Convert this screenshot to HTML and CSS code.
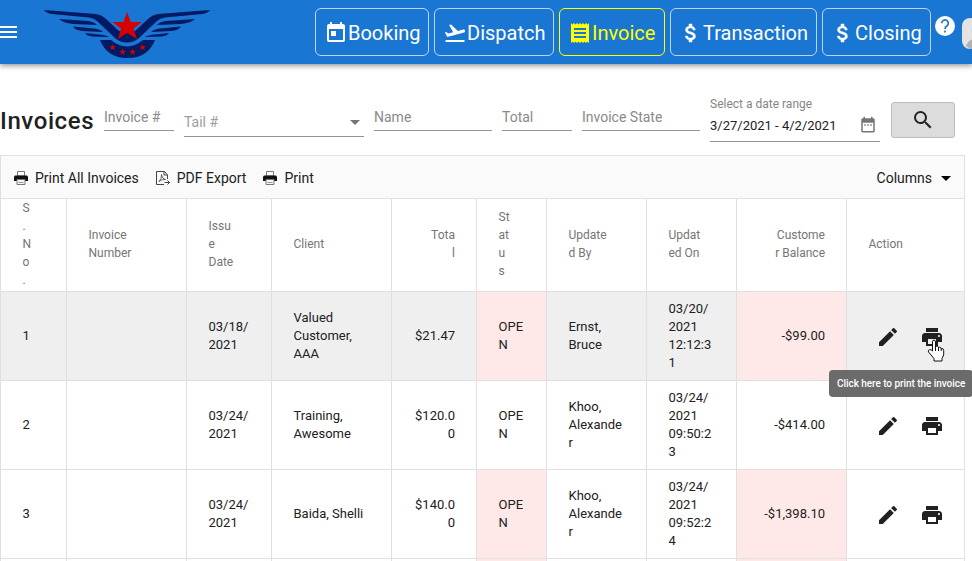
FILE: index.html
```
<!DOCTYPE html>
<html lang="en">

<head>
    <meta charset="UTF-8">
    <meta name="viewport" content="width=device-width, initial-scale=1.0">
    <title>Invoices</title>
    <link rel="stylesheet" href="styles.css">
</head>

<body>
    <!-- icon sprite -->
    <svg class="sprite" width="0" height="0">
        <symbol id="i-edit" viewBox="0 0 24 24"><path d="M3 17.25V21h3.75L17.81 9.94l-3.75-3.75L3 17.25zM20.71 7.04a1 1 0 0 0 0-1.41l-2.34-2.34a1 1 0 0 0-1.41 0l-1.83 1.83 3.75 3.75 1.83-1.83z"/></symbol>
        <symbol id="i-print" viewBox="0 0 24 24"><path d="M19 8H5c-1.66 0-3 1.34-3 3v6h4v4h12v-4h4v-6c0-1.66-1.34-3-3-3zm-3 11H8v-5h8v5zm3-7c-.55 0-1-.45-1-1s.45-1 1-1 1 .45 1 1-.45 1-1 1zm-1-9H6v4h12V3z"/></symbol>
        <symbol id="i-dollar" viewBox="0 0 24 24"><path d="M11.8 10.9c-2.27-.59-3-1.2-3-2.15 0-1.09 1.01-1.85 2.7-1.85 1.78 0 2.44.85 2.5 2.1h2.21c-.07-1.72-1.12-3.3-3.21-3.81V3h-3v2.16c-1.94.42-3.5 1.68-3.5 3.61 0 2.31 1.91 3.46 4.7 4.13 2.5.6 3 1.48 3 2.41 0 .69-.49 1.79-2.7 1.79-2.06 0-2.87-.92-2.98-2.1h-2.2c.12 2.19 1.76 3.42 3.68 3.83V21h3v-2.15c1.95-.37 3.5-1.5 3.5-3.55 0-2.84-2.43-3.81-4.7-4.4z" stroke="currentColor" stroke-width=".5"/></symbol>
        <symbol id="i-printer" viewBox="0 0 14 14">
            <path d="M3.5.5h7V5h-7z" fill="#fff" stroke="#777"/>
            <path d="M0 5.500 1 4.500h12l1 1V10H0z" fill="#111"/>
            <path d="M3 8.500h8V13.500H3z" fill="#f4f4f4" stroke="#777"/>
            <path d="M4.500 11.500h5" stroke="#999"/>
        </symbol>
    </svg>

    <header class="topbar">
        <svg class="menu" width="17" height="12" viewBox="0 0 17 12"><path d="M0 0h17v2H0zM0 5h17v2H0zM0 10h17v2H0z" fill="#fff"/></svg>
        <svg class="logo" width="166" height="50" viewBox="0 0 166 50">
            <g fill="#001b63">
                <path id="wing" d="M0 2 52 6Q58 7 62 11L75 23 83 25V34.500Q77 35 71 30L53 13Q50 10 45 9.500L8 6Q2 5 0 2zM15 11 44 13Q51 14 53 17L29 16Q19 15 15 11zM29 18.500 50 20.500Q56 21 59 24L38 23Q31 22 29 18.500zM41 25 55 26.500Q62 27 65 29L48 28.500Q43 28 41 25z"/>
                <use href="#wing" transform="translate(166 0) scale(-1 1)"/>
                <path d="M56 32H67Q83 45 99 32H111Q104 50 83.500 50 63 50 56 32z"/>
            </g>
            <g fill="#d60000">
                <path id="star" d="M83 4 86.800 14H98L89.500 20.500 93 31 83 25 74 31 77 20.500 68.500 14H79.500z"/>
                <use href="#star" transform="translate(49.500 35) scale(.23)"/>
                <use href="#star" transform="translate(59.500 39.500) scale(.23)"/>
                <use href="#star" transform="translate(69.500 39.500) scale(.23)"/>
                <use href="#star" transform="translate(79.500 35) scale(.23)"/>
            </g>
        </svg>
        <nav class="nav">
            <a class="nav-btn booking"><svg width="24" height="24" viewBox="0 0 24 24"><path d="M19 3h-1V1h-2v2H8V1H6v2H5c-1.110 0-2 .9-2 2v14c0 1.100.89 2 2 2h14c1.100 0 2-.9 2-2V5c0-1.100-.9-2-2-2zm0 16H5V8h14v11zM7 10h5v5H7z"/></svg>Booking</a>
            <a class="nav-btn dispatch"><svg width="24" height="24" viewBox="0 0 24 24"><path d="M2.500 19h19v2h-19zM22.070 9.640c-.21-.8-1.040-1.280-1.840-1.060L14.920 10l-6.900-6.430-1.930.51 4.140 7.170-4.970 1.330-1.970-1.540-1.450.39 2.590 4.490s7.120-1.900 16.570-4.430c.81-.23 1.280-1.050 1.070-1.850z"/></svg>Dispatch</a>
            <a class="nav-btn invoice active"><svg width="24" height="24" viewBox="0 0 24 24"><path d="M18 17H6v-2h12v2zm0-4H6v-2h12v2zm0-4H6V7h12v2zM3 22l1.500-1.500L6 22l1.500-1.500L9 22l1.500-1.500L12 22l1.500-1.500L15 22l1.500-1.500L18 22l1.500-1.500L21 22V2l-1.500 1.500L18 2l-1.500 1.500L15 2l-1.500 1.500L12 2l-1.500 1.500L9 2 7.500 3.500 6 2 4.500 3.500 3 2v20z"/></svg>Invoice</a>
            <a class="nav-btn transaction"><svg width="24" height="24"><use href="#i-dollar"/></svg>Transaction</a>
            <a class="nav-btn closing"><svg width="24" height="24"><use href="#i-dollar"/></svg>Closing</a>
        </nav>
        <svg class="help" width="24" height="24" viewBox="0 0 24 24"><circle cx="12" cy="12" r="10" fill="#fff"/><path d="M8.700 9.200A3.300 3.300 0 1 1 14 11.800C12.600 12.700 12 13.200 12 15M12 16.500v2" fill="none" stroke="#1976d2" stroke-width="1.700"/></svg>
        <svg class="avatar" width="32" height="31" viewBox="0 0 32 31"><rect width="32" height="31" rx="8" fill="#e3e3e3"/><circle cx="16" cy="13" r="6.500" fill="#c9c9c9"/><path d="M4 28Q7 20 16 20t12 8L24 31H8z" fill="#b0b0b0"/></svg>
    </header>

    <section class="filters">
        <h1>Invoices</h1>
        <div class="field w-sm">Invoice #</div>
        <div class="field tail">Tail #<span class="caret"></span></div>
        <div class="field w-md">Name</div>
        <div class="field w-sm">Total</div>
        <div class="field w-md">Invoice State</div>
        <div class="date">
            <label>Select a date range</label>
            <div class="date-value">3/27/2021 - 4/2/2021
                <svg width="18" height="18" viewBox="0 0 24 24"><path d="M19 3h-1V1h-2v2H8V1H6v2H5a2 2 0 0 0-2 2v15a2 2 0 0 0 2 2h14a2 2 0 0 0 2-2V5a2 2 0 0 0-2-2zm0 17H5V9h14zM7 11h2v2H7zm4 0h2v2h-2zm4 0h2v2h-2z" fill="#757575"/></svg>
            </div>
        </div>
        <button class="search"><svg width="24" height="24" viewBox="0 0 24 24"><path d="M15.500 14h-.79l-.28-.27A6.471 6.471 0 0 0 16 9.500 6.500 6.500 0 1 0 9.500 16c1.610 0 3.090-.59 4.230-1.570l.27.28v.79l5 4.990L20.490 19l-4.990-5zm-6 0C7.010 14 5 11.990 5 9.500S7.010 5 9.500 5 14 7.010 14 9.500 11.990 14 9.500 14z" fill="#222"/></svg></button>
    </section>

    <main class="grid">
        <div class="toolbar">
            <span class="tool"><svg width="14" height="14"><use href="#i-printer"/></svg>Print All Invoices</span>
            <span class="tool"><svg width="14" height="14" viewBox="0 0 14 14" fill="none" stroke="#444"><path d="M11.500 8V4L8.500.5H.5v13H8M8 .5V4h3.500M8.500 11.500h5M11.500 9.500l2 2-2 2"/><path d="M3 10.500Q6 7.500 5.500 3.500 6 8 9.500 8.500 6 8 3 10.500" stroke-width=".8"/></svg>PDF Export</span>
            <span class="tool"><svg width="14" height="14"><use href="#i-printer"/></svg>Print</span>
            <span class="columns">Columns<span class="caret"></span></span>
        </div>
        <table>
            <colgroup>
                <col class="c-no"><col class="c-invoice"><col class="c-issue"><col class="c-client"><col class="c-total"><col class="c-status"><col class="c-by"><col class="c-on"><col class="c-balance"><col class="c-action">
            </colgroup>
            <thead>
                <tr>
                    <th>S.No.</th>
                    <th>Invoice Number</th>
                    <th>Issue Date</th>
                    <th>Client</th>
                    <th class="num">Total</th>
                    <th>Status</th>
                    <th>Updated By</th>
                    <th>Updated On</th>
                    <th class="num">Customer Balance</th>
                    <th>Action</th>
                </tr>
            </thead>
            <tbody>
                <tr class="hover">
                    <td>1</td>
                    <td></td>
                    <td>03/18/2021</td>
                    <td>Valued Customer, AAA</td>
                    <td class="num">$21.47</td>
                    <td class="due">OPEN</td>
                    <td>Ernst, Bruce</td>
                    <td>03/20/2021 12:12:31</td>
                    <td class="num due">-$99.00</td>
                    <td>
                        <div class="actions">
                            <svg width="24" height="24"><use href="#i-edit"/></svg>
                            <div class="print">
                                <svg width="24" height="24"><use href="#i-print"/></svg>
                                <svg class="cursor" width="18" height="23" viewBox="0 0 18 23"><path d="M5.500 12V3Q5.500 1 7 1t1.500 2v5Q9 7 10 7t1.500 1.500Q12 8 13 8.200T14.200 9.700Q16.700 9 16.700 11.500V16L15 19.500V22H7V19.500L1.500 13Q.7 11 2.500 10.700T5.500 12z" fill="#fff" stroke="#111"/><path d="M8.500 8v4M11.500 8.500V12M14.200 9.500V12" stroke="#111"/></svg>
                                <div class="tooltip">Click here to print the invoice</div>
                            </div>
                        </div>
                    </td>
                </tr>
                <tr>
                    <td>2</td>
                    <td></td>
                    <td>03/24/2021</td>
                    <td>Training, Awesome</td>
                    <td class="num">$120.00</td>
                    <td>OPEN</td>
                    <td>Khoo, Alexander</td>
                    <td>03/24/2021 09:50:23</td>
                    <td class="num">-$414.00</td>
                    <td><div class="actions"><svg width="24" height="24"><use href="#i-edit"/></svg><svg width="24" height="24"><use href="#i-print"/></svg></div></td>
                </tr>
                <tr>
                    <td>3</td>
                    <td></td>
                    <td>03/24/2021</td>
                    <td>Baida, Shelli</td>
                    <td class="num">$140.00</td>
                    <td class="due">OPEN</td>
                    <td>Khoo, Alexander</td>
                    <td>03/24/2021 09:52:24</td>
                    <td class="num due">-$1,398.10</td>
                    <td><div class="actions"><svg width="24" height="24"><use href="#i-edit"/></svg><svg width="24" height="24"><use href="#i-print"/></svg></div></td>
                </tr>
                <tr class="last">
                    <td></td>
                    <td></td>
                    <td></td>
                    <td></td>
                    <td></td>
                    <td class="due"></td>
                    <td></td>
                    <td></td>
                    <td class="due"></td>
                    <td></td>
                </tr>
            </tbody>
        </table>
    </main>
</body>

</html>
```
FILE: styles.css
```
:root {
    --primary: #1976d2;
    --border: #e0e0e0;
    --text: #212121;
    --muted: #757575;
}

* {
    margin: 0;
    padding: 0;
    box-sizing: border-box;
}

body {
    height: 561px;
    overflow: hidden;
    background: #fff;
    color: var(--text);
    font-family: Roboto, sans-serif;
    font-size: 14px;
}

svg {
    display: block;
    flex: none;
}

.sprite {
    position: absolute;
}

/* top bar */
.topbar {
    display: flex;
    height: 64px;
    background: var(--primary);
    box-shadow: 0 2px 5px rgba(0, 0, 0, 0.4);
}

.menu {
    margin-top: 26px;
}

.logo {
    margin: 8px 105px 0 27px;
}

.nav {
    display: flex;
    flex: none;
    gap: 5px;
    padding-top: 8px;
}

.nav-btn {
    display: flex;
    align-items: center;
    height: 48px;
    padding: 2px 0 0 8px;
    border: 1px solid #bcd5f3;
    border-radius: 6px;
    color: #fff;
    font-size: 20px;
    white-space: nowrap;
}

.nav-btn svg {
    fill: currentColor;
}

.nav-btn.active {
    color: #ff0;
    border-color: #ff0;
}

.booking {
    width: 114px;
}

.dispatch {
    width: 120px;
}

.invoice {
    width: 106px;
}

.transaction {
    width: 147px;
}

.closing {
    width: 109px;
}

.help {
    margin: 14px 0 0 2px;
}

.avatar {
    margin: 18px 0 0 5px;
}

/* filters */
.filters {
    display: flex;
    align-items: flex-start;
    height: 91px;
    gap: 10px;
}

.filters h1 {
    flex: none;
    width: 94px;
    margin-top: 43px;
    font-size: 24px;
    font-weight: 500;
    line-height: 28px;
    letter-spacing: 0.6px;
}

.field {
    display: flex;
    flex: none;
    align-items: center;
    justify-content: space-between;
    height: 28px;
    margin-top: 39px;
    border-bottom: 1px solid #949494;
    color: #8a8a8a;
}

.w-sm {
    width: 70px;
}

.w-md {
    width: 118px;
}

.tail {
    width: 180px;
    margin-top: 45px;
    padding-bottom: 1px;
    color: #9e9e9e;
}

.caret {
    margin-right: 4px;
    border: 5px solid transparent;
    border-top-color: currentColor;
    border-bottom: 0;
}

.tail .caret {
    color: #757575;
}

.date {
    flex: none;
    width: 170px;
    margin-top: 32px;
    border-bottom: 1px solid #949494;
}

.date label {
    display: block;
    color: #858585;
    font-size: 12px;
    line-height: 16px;
}

.date-value {
    display: flex;
    align-items: center;
    justify-content: space-between;
    height: 29px;
    padding: 0 3px 3px 0;
    font-size: 13px;
}

.search {
    display: flex;
    align-items: center;
    justify-content: center;
    flex: none;
    width: 64px;
    height: 36px;
    margin: 38px 0 0 1px;
    border: 1px solid #bdbdbd;
    border-radius: 3px;
    background: #dcdcdc;
}

/* grid */
.grid {
    width: 965px;
    border: 1px solid var(--border);
    border-bottom: 0;
}

.toolbar {
    display: flex;
    align-items: center;
    height: 43px;
    padding: 2px 13px 0;
    border-bottom: 1px solid var(--border);
    background: #fafafa;
}

.tool {
    display: flex;
    align-items: center;
    gap: 7px;
    margin-right: 17px;
}

.columns {
    display: flex;
    align-items: center;
    gap: 9px;
    margin-left: auto;
}

.columns .caret {
    margin-right: 0;
    color: #000;
}

table {
    width: 963px;
    table-layout: fixed;
    border-collapse: separate;
    border-spacing: 0;
}

.c-no {
    width: 65px;
}

.c-invoice,
.c-client {
    width: 120px;
}

.c-issue,
.c-total {
    width: 85px;
}

.c-status {
    width: 70px;
}

.c-by {
    width: 100px;
}

.c-on {
    width: 90px;
}

.c-balance {
    width: 110px;
}

.c-action {
    width: 118px;
}

th,
td {
    border-bottom: 1px solid var(--border);
    border-left: 1px solid var(--border);
    line-height: 18px;
    text-align: left;
    vertical-align: middle;
    word-break: break-word;
}

th:first-child,
td:first-child {
    border-left: 0;
}

th {
    height: 93px;
    padding: 0 35px 2px 21.5px;
    color: var(--muted);
    font-size: 12px;
    font-weight: 400;
}

td {
    height: 89px;
    padding: 0 21px 0 21.5px;
    font-size: 13px;
}

.num {
    text-align: right;
}

th.num {
    padding: 0 21px 2px 37px;
}

.hover td {
    background: #efefef;
}

td.due,
.hover td.due {
    background: #ffe9e8;
}

.last td {
    height: 2px;
    border-bottom: 0;
}

.actions {
    display: flex;
    align-items: center;
    gap: 20px;
    margin: 2px 0 0 7.5px;
    fill: #212121;
}

.print {
    position: relative;
}

.cursor {
    position: absolute;
    top: 14px;
    left: 7px;
    z-index: 2;
}

.tooltip {
    position: absolute;
    top: 45px;
    left: -91px;
    z-index: 1;
    height: 27px;
    padding: 0 8px;
    border-radius: 4px;
    background: #6b6b6b;
    color: #fff;
    font-size: 10px;
    font-weight: 500;
    letter-spacing: -0.05px;
    line-height: 27px;
    white-space: nowrap;
}
```
